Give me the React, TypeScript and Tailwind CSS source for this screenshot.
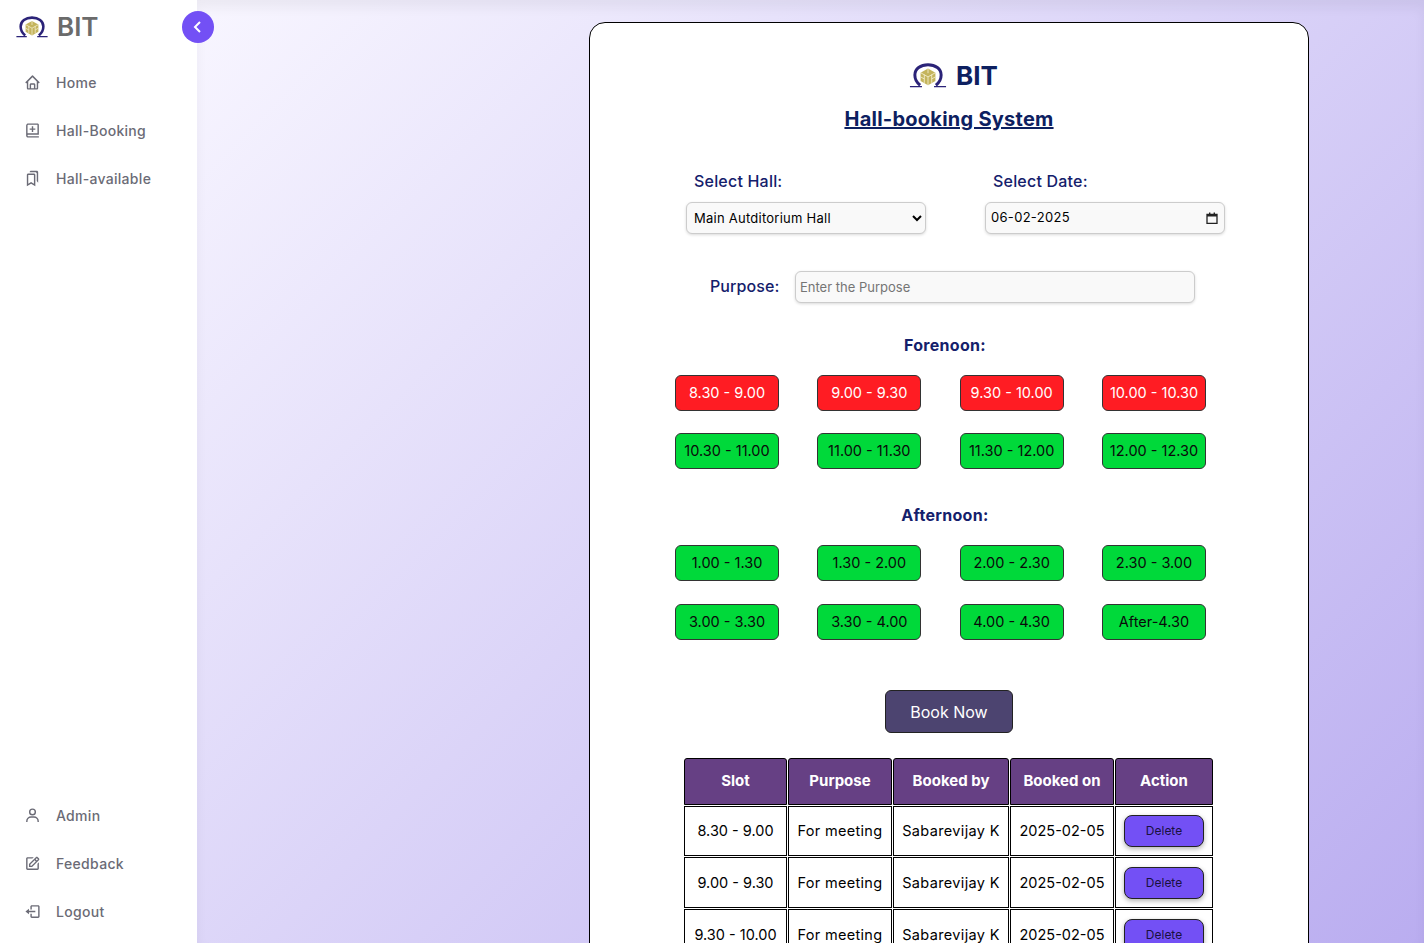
import React from "react";
import { BiHome, BiBookAdd, BiBookmarks, BiUser, BiEdit, BiLogOut, BiChevronLeft } from "react-icons/bi";

function Logo({ className }: { className: string }) {
  return (
    <svg viewBox="0 0 40 27" className={className} aria-hidden="true">
      <path d="M11.5 24 C7.5 21 5.8 17 5.8 13 C5.8 6.3 12 1.8 20 1.8 C28 1.8 34.2 6.3 34.2 13 C34.2 17 32.5 21 28.5 24" fill="none" stroke="#2b2378" strokeWidth="3.2" />
      <path d="M0.5 25.5 H13.5 M26.5 25.5 H39.5" fill="none" stroke="#2b2378" strokeWidth="1.5" />
      <path d="M20 6 L28 10.5 V19.5 L20 24 L12 19.5 V10.5 Z" fill="#c4b45c" />
      <path d="M20 6 V11 M12 10.5 L20 15 L28 10.5 M20 15 V24 M16 12.5 V21.5 M24 12.5 V21.5 M12 15 L16 17.2 M24 17.2 L28 15" stroke="#f5f0d2" strokeWidth="0.9" fill="none" />
    </svg>
  );
}

const topNav = [
  { label: "Home", Icon: BiHome },
  { label: "Hall-Booking", Icon: BiBookAdd },
  { label: "Hall-available", Icon: BiBookmarks },
];
const bottomNav = [
  { label: "Admin", Icon: BiUser },
  { label: "Feedback", Icon: BiEdit },
  { label: "Logout", Icon: BiLogOut },
];

function NavItem({ label, Icon }: { label: string; Icon: typeof BiHome }) {
  return (
    <div className="flex h-12 items-center pl-6 text-[#6b6b76]">
      <Icon className="h-[17px] w-[17px] shrink-0" />
      <span className="ml-[15px] text-[14px] font-medium tracking-[0.3px]">{label}</span>
    </div>
  );
}

function Slot({ label, booked }: { label: string; booked?: boolean }) {
  return (
    <button
      className={
        booked
          ? "h-9 w-[104px] rounded-md border border-[#333] bg-[#ff1c23] text-[14.5px] text-white"
          : "h-9 w-[104px] rounded-md border border-[#333] bg-[#00d93a] text-[14.5px] text-[#0a0a0a]"
      }
    >
      {label}
    </button>
  );
}

const forenoon = [
  ["8.30 - 9.00", true], ["9.00 - 9.30", true], ["9.30 - 10.00", true], ["10.00 - 10.30", true],
  ["10.30 - 11.00", false], ["11.00 - 11.30", false], ["11.30 - 12.00", false], ["12.00 - 12.30", false],
] as const;
const afternoon = ["1.00 - 1.30", "1.30 - 2.00", "2.00 - 2.30", "2.30 - 3.00", "3.00 - 3.30", "3.30 - 4.00", "4.00 - 4.30", "After-4.30"];
const rows = ["8.30 - 9.00", "9.00 - 9.30", "9.30 - 10.00"];
const headers = [
  ["Slot", "w-[103px]"], ["Purpose", "w-[104px]"], ["Booked by", "w-[116px]"], ["Booked on", "w-[104px]"], ["Action", "w-[98px]"],
];

export default function App() {
  return (
    <div className="relative flex h-screen overflow-hidden font-['Inter',sans-serif]">
      <aside className="flex w-[197px] shrink-0 flex-col bg-white">
        <div className="flex h-[54px] items-center pl-4">
          <Logo className="h-[22px] w-8" />
          <span className="ml-[9px] -mt-[1px] text-[26px] font-semibold text-[#6b6b6b]">BIT</span>
        </div>
        <nav className="mt-1">
          {topNav.map((n) => <NavItem key={n.label} {...n} />)}
        </nav>
        <nav className="mt-auto mb-2">
          {bottomNav.map((n) => <NavItem key={n.label} {...n} />)}
        </nav>
      </aside>
      <button className="absolute left-[182px] top-[11px] flex h-8 w-8 items-center justify-center rounded-full bg-[#7350f5] text-white">
        <BiChevronLeft className="h-6 w-6" />
      </button>

      <main className="min-w-0 flex-1 bg-[linear-gradient(135deg,#f8f6ff,#baadf0)] pl-[392px] pt-[22px] shadow-[inset_0_8px_12px_rgba(0,0,0,0.05)]">
        <div className="h-[1200px] w-[720px] rounded-2xl border border-black bg-white">
          <div className="mt-10 flex items-center justify-center pl-2">
            <Logo className="h-[25px] w-10" />
            <span className="ml-2 text-[26px] font-bold leading-[25px] text-[#0d2060]">BIT</span>
          </div>
          <h1 className="mt-4 text-center text-[20px] font-bold tracking-[0.25px] text-[#0d2060] underline">Hall-booking System</h1>

          <div className="ml-[96px] mt-[35px] flex gap-[59px]">
            <div className="w-60">
              <label className="ml-2 block h-[33px] text-[16px] font-medium leading-[24px] tracking-[0.2px] text-[#14206b]">Select Hall:</label>
              <select className="h-8 w-full rounded-md border border-[#ccc] bg-[#f9f9f9] px-[3px] text-[13px] tracking-[0.25px] shadow-[0_1px_3px_rgba(0,0,0,0.15)]">
                <option>Main Autditorium Hall</option>
              </select>
            </div>
            <div className="w-60">
              <label className="ml-2 block h-[33px] text-[16px] font-medium leading-[24px] tracking-[0.2px] text-[#14206b]">Select Date:</label>
              <div className="flex h-8 w-full items-center justify-between rounded-md border border-[#ccc] bg-[#f9f9f9] pl-[5px] pr-[6px] text-[13px] text-black shadow-[0_1px_3px_rgba(0,0,0,0.15)]">
                <span className="-mt-[1px] tracking-[0.3px]">06-02-2025</span>
                <svg viewBox="0 0 12 12" className="h-3 w-3" aria-hidden="true">
                  <path d="M1 2.5h10v9H1z" fill="none" stroke="#222" strokeWidth="1.3" />
                  <path d="M1 2h10v2.5H1z M3 0.5h1.4V2H3z M7.6 0.5H9V2H7.6z" fill="#222" />
                </svg>
              </div>
            </div>
          </div>

          <div className="ml-[120px] mt-[37px] flex items-center">
            <label className="-mt-[2px] w-[85px] text-[16px] font-medium tracking-[0.1px] text-[#14206b]">Purpose:</label>
            <input
              placeholder="Enter the Purpose"
              className="h-8 w-[400px] rounded-md border border-[#ccc] bg-[#f9f9f9] px-1 pb-[1px] text-[13px] shadow-[0_1px_3px_rgba(0,0,0,0.15)] placeholder:text-[#757575]"
            />
          </div>

          <h2 className="mt-[30px] pr-2 text-center text-[16px] font-bold leading-6 tracking-[0.3px] text-[#14206b]">Forenoon:</h2>
          <div className="ml-[85px] mt-[18px] grid w-[531px] grid-cols-[104px_104px_104px_104px] justify-between gap-y-[22px]">
            {forenoon.map(([label, booked]) => <Slot key={label} label={label} booked={booked} />)}
          </div>

          <h2 className="mt-[34px] pr-2 text-center text-[16px] font-bold leading-6 tracking-[0.3px] text-[#14206b]">Afternoon:</h2>
          <div className="ml-[85px] mt-[18px] grid w-[531px] grid-cols-[104px_104px_104px_104px] justify-between gap-y-[23px]">
            {afternoon.map((label) => <Slot key={label} label={label} />)}
          </div>

          <div className="mt-[50px] flex justify-center">
            <button className="h-[43px] w-32 rounded-md border border-[#222] bg-[#4c4470] text-[16px] text-white">Book Now</button>
          </div>

          <table className="ml-[93px] mt-[24px] w-[531px] table-fixed border-separate border-spacing-[1px] text-center text-[14.5px] text-black">
            <thead>
              <tr>
                {headers.map(([h, w]) => (
                  <th key={h} className={`${w} h-[47px] rounded-t-[3px] border border-black bg-[#664084] text-[15px] font-bold text-white`}>{h}</th>
                ))}
              </tr>
            </thead>
            <tbody>
              {rows.map((r, i) => (
                <tr key={r}>
                  <td className={i === 0 ? "h-[50px] border border-black" : "h-[51px] border border-black"}>{r}</td>
                  <td className="border border-black tracking-[0.3px]">For meeting</td>
                  <td className="border border-black tracking-[0.35px]">Sabarevijay K</td>
                  <td className="border border-black">2025-02-05</td>
                  <td className="border border-black">
                    <button className="h-8 w-20 rounded-lg border border-[#222] bg-[#7350f5] text-[12px] text-[#1a1040] shadow-[0_2px_5px_rgba(0,0,0,0.3)]">Delete</button>
                  </td>
                </tr>
              ))}
            </tbody>
          </table>
        </div>
      </main>
    </div>
  );
}
